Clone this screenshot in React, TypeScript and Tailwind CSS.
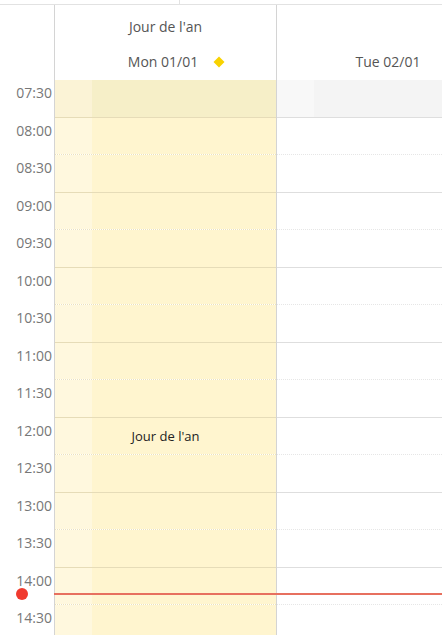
const slots = [
  "07:30", "08:00", "08:30", "09:00", "09:30", "10:00", "10:30", "11:00",
  "11:30", "12:00", "12:30", "13:00", "13:30", "14:00", "14:30",
];

function Diamond() {
  return (
    <svg width="12" height="12" viewBox="0 0 12 12" className="ml-[15px] mt-[-1px]">
      <path d="M6 0.5 L11.5 6 L6 11.5 L0.5 6 Z" fill="#f8d200" />
    </svg>
  );
}

function DayColumn({ holiday }: { holiday: boolean }) {
  return (
    <div className="w-[222px] shrink-0 border-r border-[#d4d4d4] flex flex-col">
      {slots.map((s, i) => {
        const off = i === 0;
        const side = holiday ? (off ? "bg-[#fbf3d6]" : "bg-[#fff8de]") : off ? "bg-[#f8f8f8]" : "bg-white";
        const main = holiday ? (off ? "bg-[#f6efc8]" : "bg-[#fff5cf]") : off ? "bg-[#f4f4f4]" : "bg-white";
        const line = i % 2 === 0 ? (holiday ? "border-b border-[#e6dcb8]" : "border-b border-[#dedede]") : (holiday ? "border-b border-dotted border-[#ece2bd]" : "border-b border-dotted border-[#e6e6e6]");
        return (
          <div key={s} className={"h-[37.5px] shrink-0 flex " + line}>
            <div className={"w-[37px] shrink-0 " + side} />
            <div className={"flex-1 flex items-center justify-center pr-[37px] " + main}>
              {holiday && s === "12:00" && (
                <span className="text-[13px] text-[#222] mt-[2px]">Jour de l'an</span>
              )}
            </div>
          </div>
        );
      })}
    </div>
  );
}

export default function App() {
  return (
    <div
      className="w-[442px] h-[635px] overflow-hidden bg-white relative"
      style={{ fontFamily: '"Open Sans", "Noto Sans", sans-serif' }}
    >
      {/* previous row stub */}
      <div className="h-[5px] border-b border-[#e2e2e2] flex">
        <div className="w-[180px] border-r border-[#e2e2e2]" />
      </div>

      {/* Header */}
      <div className="h-[75px] flex">
        <div className="w-[55px] shrink-0 border-r border-[#d4d4d4]" />
        <div className="w-[222px] shrink-0 border-r border-[#d4d4d4] flex flex-col items-center text-[14px] text-[#555]">
          <div className="mt-[12px] h-[20px] leading-[20px]">Jour de l'an</div>
          <div className="mt-[15px] h-[20px] leading-[20px] flex items-center pl-[22px]">
            Mon 01/01
            <Diamond />
          </div>
        </div>
        <div className="w-[222px] shrink-0 flex flex-col items-center text-[14px] text-[#555]">
          <div className="mt-[47px] h-[20px] leading-[20px]">Tue 02/01</div>
        </div>
      </div>

      {/* Grid */}
      <div className="flex">
        <div className="w-[55px] shrink-0 border-r border-[#d4d4d4] flex flex-col">
          {slots.map((s) => (
            <div key={s} className="h-[37.5px] shrink-0 text-right pr-[2px] pt-[3px] text-[14px] leading-[20px] text-[#777]">
              {s}
            </div>
          ))}
        </div>
        <DayColumn holiday />
        <DayColumn holiday={false} />
      </div>

      {/* Current time indicator */}
      <div className="absolute left-0 right-0 top-[588px] h-[12px] flex items-center">
        <div className="w-[12px] h-[12px] rounded-full bg-[#f03a2e] ml-[16px]" />
        <div className="flex-1 ml-[26px] h-[1.5px] bg-[#e7705f]" />
      </div>
    </div>
  );
}
